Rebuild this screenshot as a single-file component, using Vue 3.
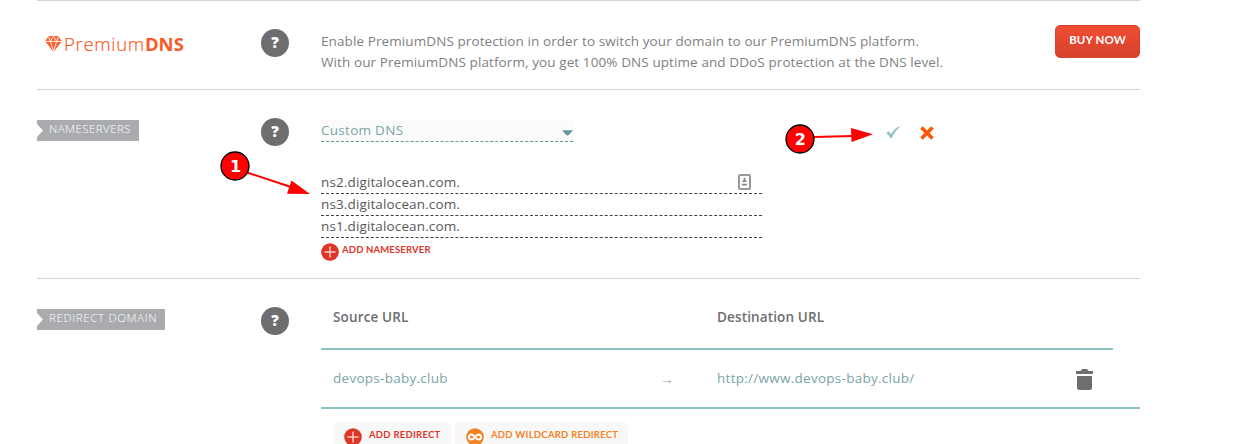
<script setup>
const nameservers = ['ns2.digitalocean.com.', 'ns3.digitalocean.com.', 'ns1.digitalocean.com.']
</script>

<template>
  <main class="page">
    <section class="row premium">
      <div class="label">
        <div class="logo">
          <svg class="gem" width="17" height="16" viewBox="0 0 16 15">
            <path fill="#fb6430" d="M3.5 0h9L16 5 8 15 0 5z" />
            <path fill="none" stroke="#fff" stroke-width=".8" d="M0 5.1h16M3.500.5 5 5l3 9.500L11 5 12.500.5M5 5 8 .3 11 5" />
          </svg>
          <span class="brand">Premium<b>DNS</b></span>
        </div>
      </div>
      <div class="help"><span>?</span></div>
      <div class="content offer">
        <p class="copy">Enable PremiumDNS protection in order to switch your domain to our PremiumDNS platform.<br />With our PremiumDNS platform, you get 100% DNS uptime and DDoS protection at the DNS level.</p>
        <button class="buy">BUY NOW</button>
      </div>
    </section>

    <section class="row servers">
      <div class="label"><span class="tag tag-ns">NAMESERVERS</span></div>
      <div class="help"><span>?</span></div>
      <div class="content">
        <div class="bar">
          <div class="select">
            <span>Custom DNS</span>
            <svg width="11" height="6" viewBox="0 0 11 6"><path fill="#67979a" d="M0 .3h11L7 4.800Q5.500 6 4 4.800z" /></svg>
          </div>
          <div class="actions">
            <svg width="14" height="13" viewBox="0 0 14 13"><path fill="#8fc4c5" d="M.2 7 2.600 5.200 5 8Q8.500 2.500 13.500.3l.3.8Q9 5 5.700 12.200H4.500Q3 9 .2 7z" /></svg>
            <svg width="14" height="14" viewBox="0 0 14 14"><path fill="none" stroke="#fd5705" stroke-width="3.600" d="m1.500 1.500 11 11m0-11-11 11" /></svg>
          </div>
        </div>
        <div class="inputs">
          <div v-for="(name, i) in nameservers" :key="name" class="input">
            <span>{{ name }}</span>
            <svg v-if="i === 0" class="card" width="13" height="16" viewBox="0 0 13 16">
              <rect x="1" y="1" width="11" height="14" rx="1" fill="#fff" stroke="#999" stroke-width="2" />
              <path fill="#888" d="M5.700 3.800h1.600v1.700L9 8H4l1.700-2.500zM4 9.800h5v1.700H4z" />
            </svg>
          </div>
        </div>
        <div class="add add-ns">
          <svg width="18" height="18" viewBox="0 0 18 18"><circle cx="9" cy="9" r="8.800" fill="#de3626" /><path stroke="#ffc9c1" stroke-width="1.500" d="M9 3.500v11M3.500 9h11" /></svg>
          <span>ADD NAMESERVER</span>
        </div>
      </div>
    </section>

    <section class="row redirect">
      <div class="label"><span class="tag tag-rd">REDIRECT DOMAIN</span></div>
      <div class="help"><span>?</span></div>
      <div class="content">
        <div class="line head"><span>Source URL</span><span></span><span>Destination URL</span></div>
        <div class="line body">
          <span class="url">devops-baby.club</span><span class="arrow">→</span><span class="url">http://www.devops-baby.club/</span>
          <svg class="trash" width="17" height="21" viewBox="0 0 17 21"><path fill="#6d6e70" d="M0 2h4.500Q5.500 0 6.500 0h4q1 0 2 2H17v3H0zM1 7h15v11.500Q16 21 13.500 21h-10Q1 21 1 18.500z" /></svg>
        </div>
        <div class="buttons">
          <div class="add pill">
            <svg width="18" height="18" viewBox="0 0 18 18"><circle cx="9" cy="9" r="8.800" fill="#de3626" /><path stroke="#ffc9c1" stroke-width="1.500" d="M9 3.500v11M3.500 9h11" /></svg>
            <span>ADD REDIRECT</span>
          </div>
          <div class="add pill orange">
            <svg width="18" height="18" viewBox="0 0 18 18"><circle cx="9" cy="9" r="8.800" fill="#f58220" /><path fill="none" stroke="#fff" stroke-width="2" d="M9 9C7.500 7.200 6.700 6.600 5.500 6.600a2.500 2.500 0 0 0 0 5C6.700 11.600 7.500 11 9 9.100S11.300 6.600 12.500 6.600a2.500 2.500 0 0 1 0 5C11.300 11.600 10.500 11 9 9z" /></svg>
            <span>ADD WILDCARD REDIRECT</span>
          </div>
        </div>
      </div>
    </section>

    <svg class="notes" width="1246" height="444" viewBox="0 0 1246 444">
      <g fill="#f00">
        <path stroke="#f00" stroke-width="2" d="M247 172.500 291 187M814 137l38-1" />
        <path d="m291.500 180.500 18.500 13.500-23-.3zM851 128l22 6.200-21.500 7.800z" />
        <g stroke="#000" stroke-width="1.300"><circle cx="235" cy="166" r="14" /><circle cx="800" cy="139" r="14" /></g>
      </g>
      <g class="numbers"><text x="235.500" y="171.500">1</text><text x="800.300" y="144.700">2</text></g>
    </svg>
  </main>
</template>

<style>
body { background: #fff; overflow: hidden; }
</style>

<style scoped>
.page { position: relative; width: 1246px; height: 444px; overflow: hidden; box-sizing: border-box; padding-left: 37px; font-family: "Open Sans", "Noto Sans", sans-serif; font-size: 13.5px; font-weight: 400; color: #6d6e70; background: #fff; }
.row { box-sizing: border-box; width: 1103px; display: grid; grid-template-columns: 224px 60px 819px; align-items: start; border-top: 1px solid #d2d3d4; white-space: nowrap; }
.premium { height: 89px; }
.servers { height: 189px; }
.redirect { height: 190px; }
.logo { display: flex; align-items: center; margin: 32px 0 0 8px; height: 22px; gap: 2px; color: #fa5a28; font: 18.5px/22px "Open Sans", sans-serif; font-weight: 300; letter-spacing: .7px; -webkit-text-stroke: .2px #fa5a28; }
.gem { flex: none; }
.brand b { font-weight: 700; letter-spacing: .05px; -webkit-text-stroke: 0; }
.help { width: 28px; height: 28px; margin-top: 28px; border-radius: 50%; background: #6d6e70; color: #fff; font: 800 15px/27px "Open Sans", sans-serif; text-align: center; }
.offer { display: flex; justify-content: space-between; align-items: flex-start; }
.copy { margin: 30px 0 0; line-height: 21px; color: #808183; letter-spacing: .095px; }
.buy { margin: 24px 0 0; width: 85px; height: 33px; padding: 0 0 3px; border: 1px solid #d9432d; border-radius: 5px; background: linear-gradient(#f14c30, #d5432f); color: #fff; font: 700 11.5px/28px Lato, sans-serif; letter-spacing: .1px; }
.tag { display: block; box-sizing: border-box; height: 21px; margin-top: 30px; padding-left: 12px; background: #a9abae; color: #fff; font-size: 11.5px; font-weight: 300; line-height: 18px; letter-spacing: .45px; clip-path: polygon(0 0, 100% 0, 100% 100%, 0 100%, 0 17px, 6px 10.5px, 0 4px); }
.tag-ns { width: 102px; }
.tag-rd { width: 128px; letter-spacing: .65px; }
.bar { display: flex; justify-content: space-between; margin-top: 30px; }
.select { box-sizing: border-box; width: 252px; height: 22px; display: flex; align-items: center; justify-content: space-between; border-bottom: 1px dashed #67979a; background: #fbfbfb; color: #7aa4a6; line-height: 21px; letter-spacing: .28px; }
.select svg { margin-top: 4px; }
.actions { display: flex; gap: 20px; margin: 6px 206.5px 0 0; }
.inputs { width: 441px; margin-top: 30px; color: #58595b; letter-spacing: .13px; }
.input { display: flex; justify-content: space-between; box-sizing: border-box; height: 22px; line-height: 21px; border-bottom: 1px dashed #414042; }
.card { margin: 2px 11px 0 0; }
.add { display: flex; align-items: center; color: #de3626; font: 700 9.5px/18px Lato, sans-serif; letter-spacing: .26px; }
.add svg { flex: none; }
.add-ns { margin-top: 5px; gap: 3px; letter-spacing: .16px; }
.add-ns span { margin-top: -4px; }
.line { box-sizing: border-box; display: grid; grid-template-columns: 329px 55px 1fr 64px; align-items: center; padding-left: 12px; border-bottom: 2px solid #8bc1c1; }
.head { width: 792px; height: 71px; font-weight: 600; padding-top: 7px; letter-spacing: .14px; }
.body { height: 59px; color: #7aa4a6; }
.trash { margin-top: 2px; }
.url { letter-spacing: .27px; margin-top: -2px; }
.arrow { margin-left: -2px; }
.buttons { display: flex; gap: 4px; margin: 12px 0 0 12px; }
.pill { box-sizing: border-box; height: 34px; width: 118px; padding: 7px 0 0 11px; align-items: flex-start; gap: 7px; border-radius: 6px; background: #f8f8f8; }
.pill span { margin-top: -2px; }
.orange { width: 173px; color: #f58220; }
.notes { position: absolute; left: 0; top: 0; pointer-events: none; }
.numbers { fill: #fff; font: 700 16px "DejaVu Sans", sans-serif; text-anchor: middle; }
</style>
